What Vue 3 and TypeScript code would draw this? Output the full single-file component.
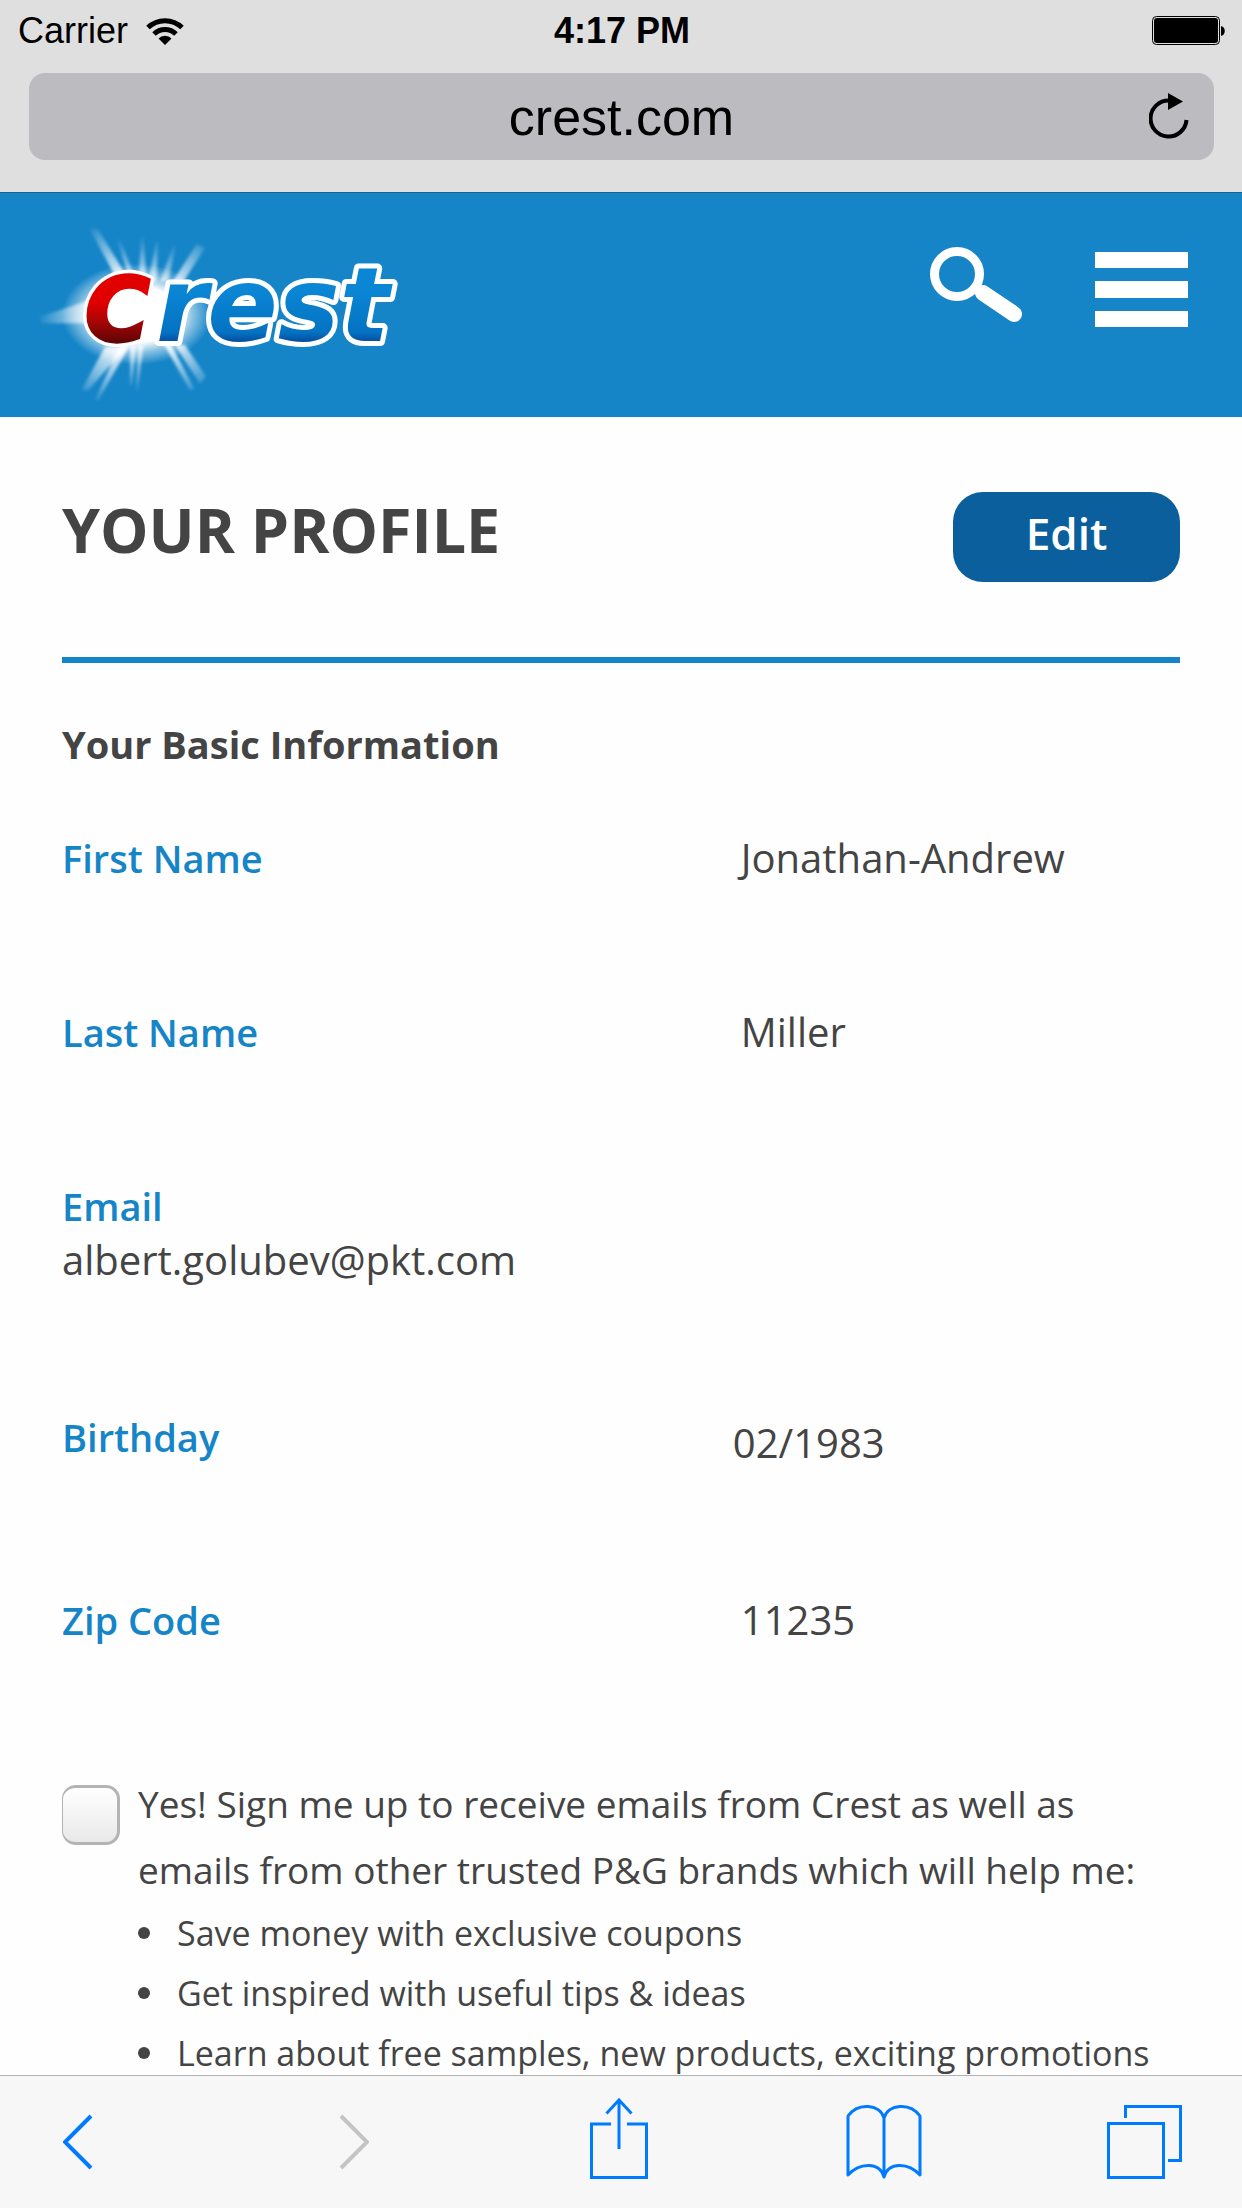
<script setup lang="ts">
import { ref } from 'vue'

interface Field {
  label: string
  value: string
  kind?: 'stacked' | 'date'
}

const address = ref('crest.com')
const subscribed = ref(false)

const fields: Field[] = [
  { label: 'First Name', value: 'Jonathan-Andrew' },
  { label: 'Last Name', value: 'Miller' },
  { label: 'Email', value: 'albert.golubev@pkt.com', kind: 'stacked' },
  { label: 'Birthday', value: '02/1983', kind: 'date' },
  { label: 'Zip Code', value: '11235' },
]

const benefits: string[] = [
  'Save money with exclusive coupons',
  'Get inspired with useful tips & ideas',
  'Learn about free samples, new products, exciting promotions',
]
</script>

<template>
  <div class="screen">
    <div class="chrome">
      <div class="status">
        <div class="carrier">
          <span>Carrier</span>
          <svg width="38" height="28" viewBox="0 0 38 28" aria-hidden="true">
            <g fill="none" stroke="#000" stroke-width="5">
              <path d="M2 10.500A24.500 24.500 0 0 1 36 10.500" />
              <path d="M8 17A15.500 15.500 0 0 1 30 17" />
            </g>
            <path d="M12.500 21.500A9 9 0 0 1 25.500 21.500L19 28Z" />
          </svg>
        </div>
        <span class="time">4:17 PM</span>
        <svg class="battery" width="74" height="30" viewBox="0 0 74 30" aria-hidden="true">
          <rect x="0.500" y="0.500" width="67" height="28" rx="4" fill="none" stroke="#000" />
          <rect x="2" y="2" width="64" height="25" rx="3" />
          <path d="M69 10C74 11 74 19 69 20Z" />
        </svg>
      </div>
      <div class="address">
        <input v-model="address" type="text" aria-label="Address" />
        <button type="button" class="reload" aria-label="Reload">
          <svg width="40" height="46" viewBox="0 0 40 46">
            <path d="M37.500 27A18 18 0 1 1 20 7.500" fill="none" stroke="#000" stroke-width="4" />
            <path d="M19 0L34 8.500L19 17Z" />
          </svg>
        </button>
      </div>
    </div>

    <header class="site-header">
      <a class="logo" href="#" aria-label="Crest home">
        <svg width="400" height="200" viewBox="0 0 1200 600">
          <defs>
            <radialGradient id="glow">
              <stop offset="0.550" stop-color="#fff" />
              <stop offset="0.750" stop-color="#fff" stop-opacity="0.500" />
              <stop offset="1" stop-color="#fff" stop-opacity="0" />
            </radialGradient>
            <radialGradient id="ray" gradientUnits="userSpaceOnUse" cx="330" cy="300" r="300">
              <stop offset="0.350" stop-color="#fff" />
              <stop offset="1" stop-color="#fff" stop-opacity="0.050" />
            </radialGradient>
            <radialGradient id="fine-ray" gradientUnits="userSpaceOnUse" cx="330" cy="300" r="240">
              <stop offset="0.400" stop-color="#fff" stop-opacity="0.800" />
              <stop offset="1" stop-color="#fff" stop-opacity="0" />
            </radialGradient>
            <linearGradient id="red" gradientUnits="userSpaceOnUse" x1="0" y1="165" x2="0" y2="385">
              <stop offset="0.450" stop-color="#e00000" />
              <stop offset="0.700" stop-color="#a80505" />
              <stop offset="1" stop-color="#5c0505" />
            </linearGradient>
            <linearGradient id="blue" gradientUnits="userSpaceOnUse" x1="0" y1="165" x2="0" y2="385">
              <stop offset="0.300" stop-color="#0a86d4" />
              <stop offset="0.850" stop-color="#0472c2" />
              <stop offset="1" stop-color="#07479a" />
            </linearGradient>
            <filter id="soft"><feGaussianBlur stdDeviation="4" /></filter>
          </defs>
          <ellipse cx="320" cy="298" rx="225" ry="152" fill="url(#glow)" />
          <g fill="url(#ray)" filter="url(#soft)">
            <path d="M178 40L202 40L300 200L265 200Z" />
            <path d="M500 88L524 100L460 200L428 200Z" />
            <path d="M30 305L180 255L180 325L35 325Z" />
            <path d="M155 525L225 395L290 395L175 525Z" />
            <path d="M195 555L270 390L300 390L205 555Z" />
            <path d="M480 525L400 385L422 385L492 520Z" />
            <path d="M510 505L430 385L465 390L528 485Z" />
          </g>
          <g fill="url(#fine-ray)" filter="url(#soft)">
            <path d="M334 60L325 200L350 200L340 60Z" />
            <path d="M378 80L355 200L380 200L384 80Z" />
            <path d="M260 70L300 200L320 200L268 68Z" />
            <path d="M430 90L390 200L415 200L438 92Z" />
            <path d="M300 510L300 390L320 390L306 510Z" />
            <path d="M318 525L325 390L340 390L324 525Z" />
          </g>
          <g font-family="'DejaVu Sans', sans-serif" font-weight="700" font-style="italic">
            <g fill="#fff" stroke="#fff" stroke-width="30" stroke-linejoin="round">
              <text x="165" y="378" font-size="265">C</text>
              <text x="378" y="378" font-size="312">rest</text>
            </g>
            <text x="165" y="378" font-size="265" fill="url(#red)" stroke="url(#red)" stroke-width="10">C</text>
            <text x="378" y="378" font-size="312" fill="url(#blue)">rest</text>
          </g>
        </svg>
      </a>
      <div class="actions">
        <button type="button" aria-label="Search">
          <svg width="92" height="76" viewBox="0 0 92 76">
            <circle cx="27" cy="27" r="22.500" fill="none" stroke="#fff" stroke-width="9" />
            <path d="M53 46L84 67" stroke="#fff" stroke-width="16" stroke-linecap="round" />
          </svg>
        </button>
        <button type="button" aria-label="Menu">
          <svg width="93" height="76" viewBox="0 0 93 76" fill="#fff">
            <rect y="0" width="93" height="16" />
            <rect y="29" width="93" height="17" />
            <rect y="59" width="93" height="16" />
          </svg>
        </button>
      </div>
    </header>

    <main class="content">
      <div class="title-row">
        <h1>YOUR PROFILE</h1>
        <button type="button" class="edit">Edit</button>
      </div>

      <section class="basic">
        <h2>Your Basic Information</h2>
        <dl>
          <div v-for="field in fields" :key="field.label" class="field" :class="field.kind">
            <dt>{{ field.label }}</dt>
            <dd>{{ field.value }}</dd>
          </div>
        </dl>
      </section>

      <section class="signup">
        <input id="subscribe" v-model="subscribed" type="checkbox" />
        <div class="signup-text">
          <label for="subscribe">
            Yes! Sign me up to receive emails from Crest as well as emails from other trusted P&amp;G brands which will help me:
          </label>
          <ul>
            <li v-for="benefit in benefits" :key="benefit">{{ benefit }}</li>
          </ul>
        </div>
      </section>
    </main>

    <nav class="toolbar" aria-label="Browser">
      <button type="button" aria-label="Back">
        <svg width="30" height="56" viewBox="0 0 30 56"><path d="M28 2L2 28L28 54" stroke-width="4" /></svg>
      </button>
      <button type="button" aria-label="Forward" disabled>
        <svg width="30" height="56" viewBox="0 0 30 56"><path d="M2 2L28 28L2 54" stroke-width="4" /></svg>
      </button>
      <button type="button" aria-label="Share">
        <svg width="58" height="88" viewBox="0 0 58 88">
          <path d="M21 26H1.500V79.500H56.500V26H37M29 51V2M16.500 15.500L29 2L41.500 15.500" stroke-width="3" />
        </svg>
      </button>
      <button type="button" aria-label="Bookmarks">
        <svg width="76" height="88" viewBox="0 0 76 88">
          <path d="M38 20C34 6 12 4 2 18V77C14 64 34 64 38 79C42 64 62 64 74 77V18C64 4 42 6 38 20V79" stroke-width="3" stroke-linejoin="round" />
        </svg>
      </button>
      <button type="button" aria-label="Tabs">
        <svg width="76" height="88" viewBox="0 0 76 88">
          <path d="M1.500 25.500H56.500V79.500H1.500ZM18.500 20V8.500H73.500V62.500H61" stroke-width="3" />
        </svg>
      </button>
    </nav>
  </div>
</template>

<style>
body {
  margin: 0;
  background: #fefefe;
}
</style>

<style scoped>
.screen {
  display: flex;
  flex-direction: column;
  height: 100vh;
  overflow: hidden;
  background: #fefefe;
  color: #444;
  font-family: 'Open Sans', sans-serif;
}

button {
  padding: 0;
  border: 0;
  background: none;
  font: inherit;
}

svg {
  display: block;
}

.chrome {
  flex: none;
  padding-bottom: 32px;
  border-bottom: 1px solid #0f6496;
  background: #dfdfdf;
  color: #000;
  font-family: 'Liberation Sans', Arial, sans-serif;
}

.status {
  display: grid;
  grid-template-columns: 1fr auto 1fr;
  align-items: center;
  height: 62px;
  padding: 0 16px 0 18px;
  margin-bottom: 11px;
  font-size: 36px;
  line-height: 62px;
}

.carrier {
  display: flex;
  align-items: center;
  gap: 18px;
}

.time {
  font-weight: 700;
}

.battery {
  justify-self: end;
}

.address {
  display: flex;
  position: relative;
  height: 87px;
  margin: 0 28px 0 29px;
  border-radius: 16px;
  background: #bcbbc0;
}

.address input {
  flex: 1;
  min-width: 0;
  padding: 0;
  border: 0;
  background: none;
  color: #000;
  font: 52px 'Liberation Sans', Arial, sans-serif;
  text-align: center;
}

.reload {
  position: absolute;
  top: 20px;
  right: 25px;
}

.site-header {
  display: flex;
  flex: none;
  justify-content: space-between;
  height: 224px;
  padding: 0 54px 0 30px;
  box-sizing: border-box;
  background: #1585c8;
}

.logo {
  margin-top: 22px;
}

.actions {
  display: flex;
  align-items: flex-start;
  gap: 73px;
  padding-top: 59px;
}

.actions button:first-child {
  margin-top: -5px;
}

.content {
  flex: 1;
  min-height: 0;
  padding: 75px 62px 0;
  overflow: hidden;
}

.title-row {
  display: flex;
  align-items: flex-start;
  justify-content: space-between;
  padding-bottom: 75px;
  border-bottom: 6px solid #1585c8;
}

h1,
h2,
dl,
dd,
ul {
  margin: 0;
  padding: 0;
}

h1 {
  font-size: 61px;
  line-height: 76px;
}

.edit {
  width: 227px;
  height: 90px;
  padding-bottom: 8px;
  border-radius: 30px;
  background: #0a5f9c;
  color: #fff;
  font-size: 44px;
  font-weight: 600;
}

.basic {
  padding-top: 54px;
  font-size: 40px;
  line-height: 54px;
}

h2 {
  margin-bottom: 60px;
  font-size: 38px;
  line-height: 54px;
}

.field {
  display: grid;
  grid-template-columns: 17fr 11fr;
  margin-bottom: 120px;
}

.field.stacked {
  display: block;
  margin-bottom: 123px;
}

.field.date {
  grid-template-columns: 3fr 2fr;
  height: 60px;
  margin-bottom: 123px;
}

.field.date dd {
  align-self: end;
}

dt {
  color: #1585c8;
  font-size: 38px;
  font-weight: 600;
}

.signup {
  display: flex;
  align-items: flex-start;
  gap: 18px;
  padding-top: 4px;
}

.signup > input {
  flex: none;
  width: 58px;
  height: 60px;
  margin: 14px 0 0;
  border: 3px solid #b4b4b4;
  border-left-width: 1px;
  border-radius: 14px;
  background: linear-gradient(#fff, #e9e9e9);
  appearance: none;
}

.signup-text {
  flex: 1;
}

.signup label {
  display: block;
  font-size: 37px;
  line-height: 66px;
}

.signup ul {
  list-style: none;
  font-size: 34px;
  line-height: 60px;
}

.signup li {
  display: flex;
  align-items: center;
  gap: 27px;
  white-space: nowrap;
}

.signup li::before {
  flex: none;
  width: 12px;
  height: 12px;
  border-radius: 50%;
  background: #444;
  content: '';
}

.toolbar {
  display: grid;
  flex: none;
  grid-template-columns: 276fr 251fr 256fr 261fr 75fr;
  align-items: center;
  justify-items: start;
  height: 132px;
  padding: 0 59px 0 63px;
  border-top: 1px solid #b2b2b2;
  background: #f7f7f7;
}

.toolbar svg {
  fill: none;
  stroke: #007aff;
}

.toolbar button:disabled svg {
  stroke: #c4c4c4;
}
</style>
